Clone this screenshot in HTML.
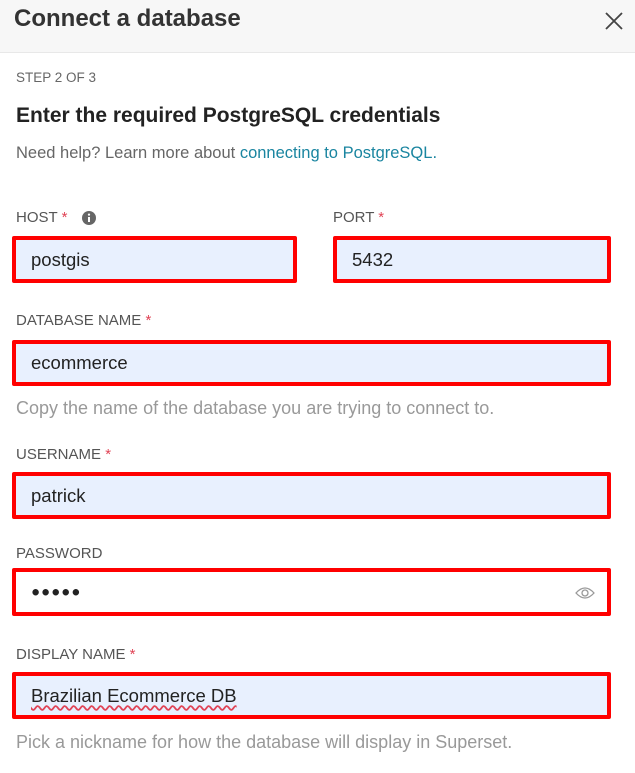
<!DOCTYPE html>
<html><head><style>
body{margin:0;width:635px;height:773px;background:#fff;font-family:"Liberation Sans",sans-serif;position:relative;overflow:hidden}
.a{position:absolute;white-space:nowrap}
.hdr{position:absolute;left:0;top:0;width:635px;height:52px;background:#f7f7f7;border-bottom:1px solid #e8e8e8}
.lbl{font-size:15px;color:#555}
.st{color:#e04355;font-size:15px}
.box{position:absolute;border:4px solid #f00;background:#e8f0fe;box-sizing:border-box;border-radius:2px}
.box span{position:absolute;left:15px;top:50%;transform:translateY(-50%);font-size:18.5px;color:#222}
.hint{font-size:18px;color:#999}
</style></head><body>
<div class="hdr"></div>
<div class="a" style="left:14px;top:5px;font-size:24px;font-weight:bold;color:#333">Connect a database</div>
<svg class="a" style="left:604px;top:11px" width="20" height="20"><path d="M2 2L18 18M18 2L2 18" stroke="#444" stroke-width="1.8"/></svg>
<div class="a" style="left:16px;top:70px;font-size:13.5px;color:#666">STEP 2 OF 3</div>
<div class="a" style="left:16px;top:104px;font-size:21px;font-weight:bold;color:#222">Enter the required PostgreSQL credentials</div>
<div class="a" style="left:16px;top:144px;font-size:16.5px;color:#666">Need help? Learn more about <span style="color:#1a85a0">connecting to PostgreSQL.</span></div>
<div class="a lbl" style="left:16px;top:209px">HOST <span class="st">*</span></div>
<svg class="a" style="left:81px;top:210px" width="16" height="16"><circle cx="8" cy="8" r="7" fill="#666"/><rect x="7" y="7" width="2" height="5" fill="#fff"/><circle cx="8" cy="4.6" r="1.1" fill="#fff"/></svg>
<div class="a lbl" style="left:333px;top:209px">PORT <span class="st">*</span></div>
<div class="box" style="left:12px;top:236px;width:285px;height:47px"><span>postgis</span></div>
<div class="box" style="left:333px;top:236px;width:278px;height:47px"><span>5432</span></div>
<div class="a lbl" style="left:16px;top:312px">DATABASE NAME <span class="st">*</span></div>
<div class="box" style="left:12px;top:340px;width:599px;height:46px"><span>ecommerce</span></div>
<div class="a hint" style="left:16px;top:398px">Copy the name of the database you are trying to connect to.</div>
<div class="a lbl" style="left:16px;top:446px">USERNAME <span class="st">*</span></div>
<div class="box" style="left:12px;top:472px;width:599px;height:47px"><span>patrick</span></div>
<div class="a lbl" style="left:16px;top:545px">PASSWORD</div>
<div class="box" style="left:12px;top:568px;width:599px;height:48px;background:#fff"><span style="letter-spacing:1px;font-size:15px">●●●●●</span>
<svg style="position:absolute;right:12px;top:14px" width="20" height="14"><path d="M1 7Q10 -3 19 7Q10 17 1 7Z" fill="none" stroke="#999" stroke-width="1.3"/><circle cx="10" cy="7" r="3" fill="none" stroke="#999" stroke-width="1.3"/></svg></div>
<div class="a lbl" style="left:16px;top:646px">DISPLAY NAME <span class="st">*</span></div>
<div class="box" style="left:12px;top:672px;width:599px;height:47px"><span style="text-decoration:underline wavy #e04355;text-underline-offset:3px">Brazilian Ecommerce DB</span></div>
<div class="a hint" style="left:16px;top:732px">Pick a nickname for how the database will display in Superset.</div>
</body></html>
